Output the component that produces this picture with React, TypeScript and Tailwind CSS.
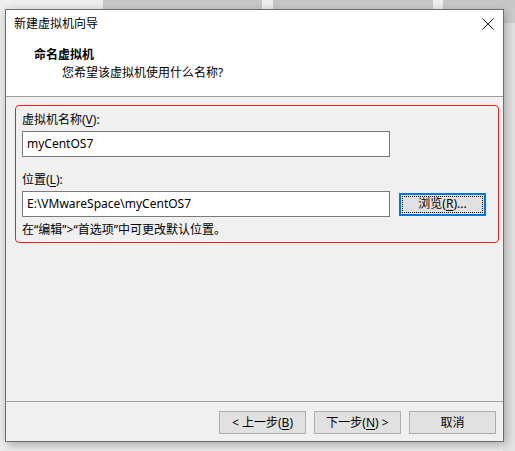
import { X } from "lucide-react";

const font = {
  fontFamily: '"Noto Sans", "Noto Sans CJK SC", sans-serif',
};

function Mnemonic({ children }: { children: string }) {
  return <span className="underline underline-offset-2">{children}</span>;
}

function DialogButton({ children }: { children: React.ReactNode }) {
  return (
    <button
      type="button"
      className="flex h-[23px] w-[87px] items-center justify-center border border-[#adadad] bg-[#e1e1e1] text-[12px] leading-none text-black"
    >
      {children}
    </button>
  );
}

export default function App() {
  return (
    <div
      className="relative h-[451px] w-[515px] overflow-hidden bg-[#eeeeee] text-black"
      style={font}
    >
      {/* windows behind the dialog */}
      <div className="absolute left-[103px] top-0 h-[23px] w-[159px] bg-gradient-to-b from-[#c6c6c6] to-[#d2d2d2]" />
      <div className="absolute left-[273px] top-0 h-[23px] w-[160px] bg-gradient-to-b from-[#c6c6c6] to-[#d2d2d2]" />
      <div className="absolute left-[443px] top-0 h-[23px] w-[72px] bg-gradient-to-b from-[#c6c6c6] to-[#d2d2d2]" />
      <div className="absolute left-[503px] top-[23px] h-[428px] w-[12px] bg-[#e4e4e4]" />

      <div className="relative ml-[5px] mt-[9px] flex h-[433px] w-[499px] flex-col border border-[#6e6e6e] bg-[#f0f0f0] shadow-[2px_3px_10px_rgba(0,0,0,0.3)]">
        {/* title bar */}
        <div className="flex h-[28px] shrink-0 items-center justify-between bg-white pl-[8px] pr-[4px]">
          <span className="text-[12px] leading-none">新建虚拟机向导</span>
          <X size={22} strokeWidth={1} className="text-black" />
        </div>

        {/* header */}
        <div className="flex h-[58px] shrink-0 flex-col bg-white pl-[28px] pt-[9px]">
          <span className="text-[12px] font-bold leading-[16px]">命名虚拟机</span>
          <span className="mt-[2px] pl-[28px] text-[12px] leading-[16px]">
            您希望该虚拟机使用什么名称?
          </span>
        </div>
        <div className="h-px shrink-0 bg-[#a0a0a0]" />

        {/* content */}
        <div className="flex flex-1 flex-col pt-[8px]">
          <div className="ml-[9px] mr-[4px] flex flex-col rounded-[4px] border border-[#ff1a1a] px-[6px] pb-[4px] pt-[6px]">
            <span className="text-[12px] leading-[16px]">
              虚拟机名称(<Mnemonic>V</Mnemonic>):
            </span>
            <div className="mt-[3px] flex h-[26px] w-[368px] items-center border border-[#7a7a7a] bg-white pl-[4px] text-[12px]">
              myCentOS7
            </div>
            <span className="mt-[15px] text-[12px] leading-[16px]">
              位置(<Mnemonic>L</Mnemonic>):
            </span>
            <div className="mt-[3px] flex items-center">
              <div className="flex h-[26px] w-[368px] items-center border border-[#7a7a7a] bg-white pl-[4px] text-[12px]">
                E:\VMwareSpace\myCentOS7
              </div>
              <button
                type="button"
                className="ml-[9px] flex h-[23px] w-[87px] items-center justify-center border-2 border-[#0078d7] bg-[#e1e1e1] p-px"
              >
                <span className="flex h-full w-full items-center justify-center border border-dotted border-black text-[12px] leading-none">
                  浏览(<Mnemonic>R</Mnemonic>)...
                </span>
              </button>
            </div>
            <span className="mt-[5px] text-[12px] leading-[16px]">
              在“编辑”&gt;“首选项”中可更改默认位置。
            </span>
          </div>
        </div>

        {/* footer */}
        <div className="h-px shrink-0 bg-[#a0a0a0]" />
        <div className="flex h-[39px] shrink-0 justify-end gap-[8px] pr-[7px] pt-[9px]">
          <DialogButton>
            &lt; 上一步(<Mnemonic>B</Mnemonic>)
          </DialogButton>
          <DialogButton>
            下一步(<Mnemonic>N</Mnemonic>) &gt;
          </DialogButton>
          <DialogButton>取消</DialogButton>
        </div>
      </div>
    </div>
  );
}
